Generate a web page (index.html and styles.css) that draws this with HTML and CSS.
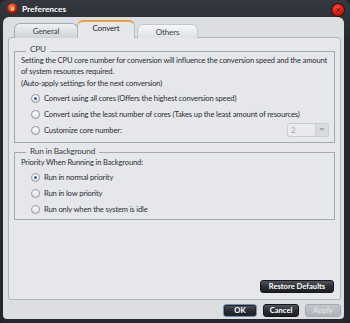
FILE: index.html
```html
<!DOCTYPE html>
<html lang="en">
<head>
    <meta charset="UTF-8">
    <title>Preferences</title>
    <link rel="stylesheet" href="styles.css">
</head>
<body>
    <div class="window">
        <div class="titlebar">
            <svg class="app-icon" width="11" height="11" viewBox="0 0 11 11">
                <defs>
                    <radialGradient id="ball" cx="40%" cy="35%" r="70%">
                        <stop offset="0" stop-color="#ff8a5a"/>
                        <stop offset="0.6" stop-color="#d42a12"/>
                        <stop offset="1" stop-color="#6a0c04"/>
                    </radialGradient>
                </defs>
                <circle cx="5.5" cy="5.5" r="5.2" fill="url(#ball)"/>
                <path d="M5.5 2.2 C6.8 3.8 7.6 5 7.2 6.8 C6.9 8.2 4.1 8.2 3.8 6.8 C3.6 5.6 4.6 4.9 5 4.1 C5.3 5 5.8 5.3 6 5.9 C6.2 4.6 5.8 3.4 5.5 2.2 Z" fill="#ffd24a"/>
            </svg>
            <span class="title">Preferences</span>
            <span class="close">&times;</span>
        </div>
        <div class="client">
            <div class="tabs">
                <div class="tab">General</div>
                <div class="tab active">Convert</div>
                <div class="tab faded">Others</div>
            </div>
            <div class="panel">
                <div class="group">
                    <span class="group-title">CPU</span>
                    <p class="text">Setting the CPU core number for conversion will influence the conversion speed and the amount of system resources required.</p>
                    <p class="text note">(Auto-apply settings for the next conversion)</p>
                    <div class="option"><span class="radio on"></span>Convert using all cores (Offers the highest conversion speed)</div>
                    <div class="option"><span class="radio"></span>Convert using the least number of cores (Takes up the least amount of resources)</div>
                    <div class="option"><span class="radio"></span>Customize core number:
                        <span class="combo"><span class="combo-value">2</span><span class="combo-arrow"></span></span>
                    </div>
                </div>
                <div class="group second">
                    <span class="group-title">Run in Background</span>
                    <p class="text">Priority When Running in Background:</p>
                    <div class="option"><span class="radio on"></span>Run in normal priority</div>
                    <div class="option"><span class="radio"></span>Run in low priority</div>
                    <div class="option"><span class="radio"></span>Run only when the system is idle</div>
                </div>
                <div class="panel-foot">
                    <button class="btn restore">Restore Defaults</button>
                </div>
            </div>
            <div class="actions">
                <button class="btn ok">OK</button>
                <button class="btn cancel">Cancel</button>
                <button class="btn disabled">Apply</button>
            </div>
        </div>
    </div>
</body>
</html>
```

FILE: styles.css
```css
body {
    margin: 0;
    padding: 0;
    background-color: #1f2227;
    font-family: "Lato", "Liberation Sans", sans-serif;
    font-size: 7.6px;
    letter-spacing: -0.15px;
    color: #2a2e35;
}
.window {
    width: 350px;
    height: 323px;
    background: linear-gradient(#33373f, #262a30 40px, #24272d);
    border-radius: 6px 6px 4px 4px;
    display: flex;
    flex-direction: column;
    overflow: hidden;
}
.titlebar {
    height: 17px;
    display: flex;
    align-items: center;
    padding: 0 6px 0 7px;
}
.app-icon {
    margin-right: 4px;
}
.title {
    color: #ffffff;
    font-weight: bold;
    font-size: 8.4px;
    letter-spacing: 0;
    flex: 1;
}
.close {
    width: 12px;
    height: 12px;
    border-radius: 50%;
    background: radial-gradient(circle at 45% 35%, #ff5a4a, #d8140c 55%, #8a0604);
    box-shadow: 0 0 0 1px #3a0a08;
    color: #6a0604;
    font-size: 9px;
    line-height: 12px;
    text-align: center;
    font-weight: bold;
    margin-top: 3px;
}
.client {
    flex: 1;
    margin: 0 6px 4px 3px;
    background-color: #dcdee2;
    border-radius: 6px 6px 4px 4px;
    display: flex;
    flex-direction: column;
}
.tabs {
    height: 20px;
    display: flex;
    align-items: flex-end;
    padding-left: 11px;
}
.tab {
    width: 62px;
    height: 14px;
    border: 1px solid #a7adb5;
    border-bottom: none;
    border-radius: 6px 6px 0 0;
    background: linear-gradient(#eef0f2, #cfd3d8);
    text-align: center;
    line-height: 15px;
    color: #3a3e45;
    font-size: 8px;
    position: relative;
    top: 1px;
}
.tab.active {
    width: 56px;
    height: 16px;
    margin-left: -1px;
    background: #e6e7ea;
    border-color: #b3b8bf;
    border-top: 2px solid #f0a23a;
    line-height: 13px;
    color: #23262b;
    z-index: 1;
}
.tab.faded {
    width: 59px;
    height: 13px;
    margin-left: 2px;
    background: linear-gradient(#f6f7f8, #dde0e4);
    border-color: #c3c7cc;
    line-height: 14px;
}
.panel {
    flex: 1;
    margin: 0 3px 0 5px;
    border: 1px solid #b1b6bd;
    border-radius: 3px;
    background-color: #e6e7ea;
    padding: 13px 5px 0 5px;
    display: flex;
    flex-direction: column;
}
.group {
    border: 1px solid #a2a9b2;
    padding: 0 5px 4px 6px;
    display: flex;
    flex-direction: column;
    align-items: flex-start;
}
.group.second {
    margin-top: 9px;
    padding-bottom: 2px;
}
.group-title {
    margin: -8px 0 0 5px;
    padding: 0 4px;
    background-color: #e6e7ea;
    line-height: 11px;
    font-size: 8.2px;
    color: #3a3e45;
}
.group.second .group-title {
    margin-top: -7px;
}
.text {
    margin: 0;
    line-height: 11px;
}
.note {
    margin-top: 1px;
}
.option {
    align-self: stretch;
    height: 16px;
    display: flex;
    align-items: center;
    padding-left: 10px;
}
.text + .option {
    margin-top: 1px;
}
.radio {
    width: 7px;
    height: 7px;
    border: 1px solid #8e959e;
    border-radius: 50%;
    background: linear-gradient(#ffffff, #dfe2e6);
    margin-right: 4px;
    position: relative;
}
.radio.on::after {
    content: "";
    position: absolute;
    left: 2px;
    top: 2px;
    width: 3px;
    height: 3px;
    border-radius: 50%;
    background-color: #3a67b0;
}
.combo {
    margin-left: auto;
    width: 40px;
    height: 12px;
    border: 1px solid #c9ccd1;
    border-radius: 3px;
    background-color: #e9eaed;
    display: flex;
}
.combo-value {
    flex: 1;
    color: #9aa0a8;
    padding-left: 3px;
    line-height: 12px;
}
.combo-arrow {
    width: 12px;
    border-left: 1px solid #cdd0d4;
    background-color: #d9dbdf;
    border-radius: 0 2px 2px 0;
    position: relative;
}
.combo-arrow::after {
    content: "";
    position: absolute;
    left: 3px;
    top: 4px;
    border-left: 3px solid transparent;
    border-right: 3px solid transparent;
    border-top: 3px solid #a4a9b0;
}
.panel-foot {
    margin-top: auto;
    display: flex;
    justify-content: flex-end;
    padding: 0 1px 6px 0;
}
.btn {
    height: 13px;
    padding: 0;
    font-family: "Lato", "Liberation Sans", sans-serif;
    font-size: 7.6px;
    letter-spacing: 0;
    font-weight: bold;
    color: #ffffff;
    background: linear-gradient(#50545c, #2c2f35 50%, #1c1e22);
    border: 1px solid #15171a;
    border-radius: 3px;
    line-height: 11px;
}
.restore {
    width: 74px;
}
.actions {
    height: 18px;
    display: flex;
    justify-content: flex-end;
    align-items: center;
    gap: 6px;
    padding: 1px 3px 0 0;
}
.ok {
    width: 34px;
    border-color: #6f8fb6;
    box-shadow: inset 0 0 0 1px #23262b;
}
.cancel {
    width: 36px;
}
.disabled {
    width: 36px;
    background: linear-gradient(#c4c7cc, #aeb2b8);
    border-color: #a7abb1;
    color: #dfe1e4;
}
```
